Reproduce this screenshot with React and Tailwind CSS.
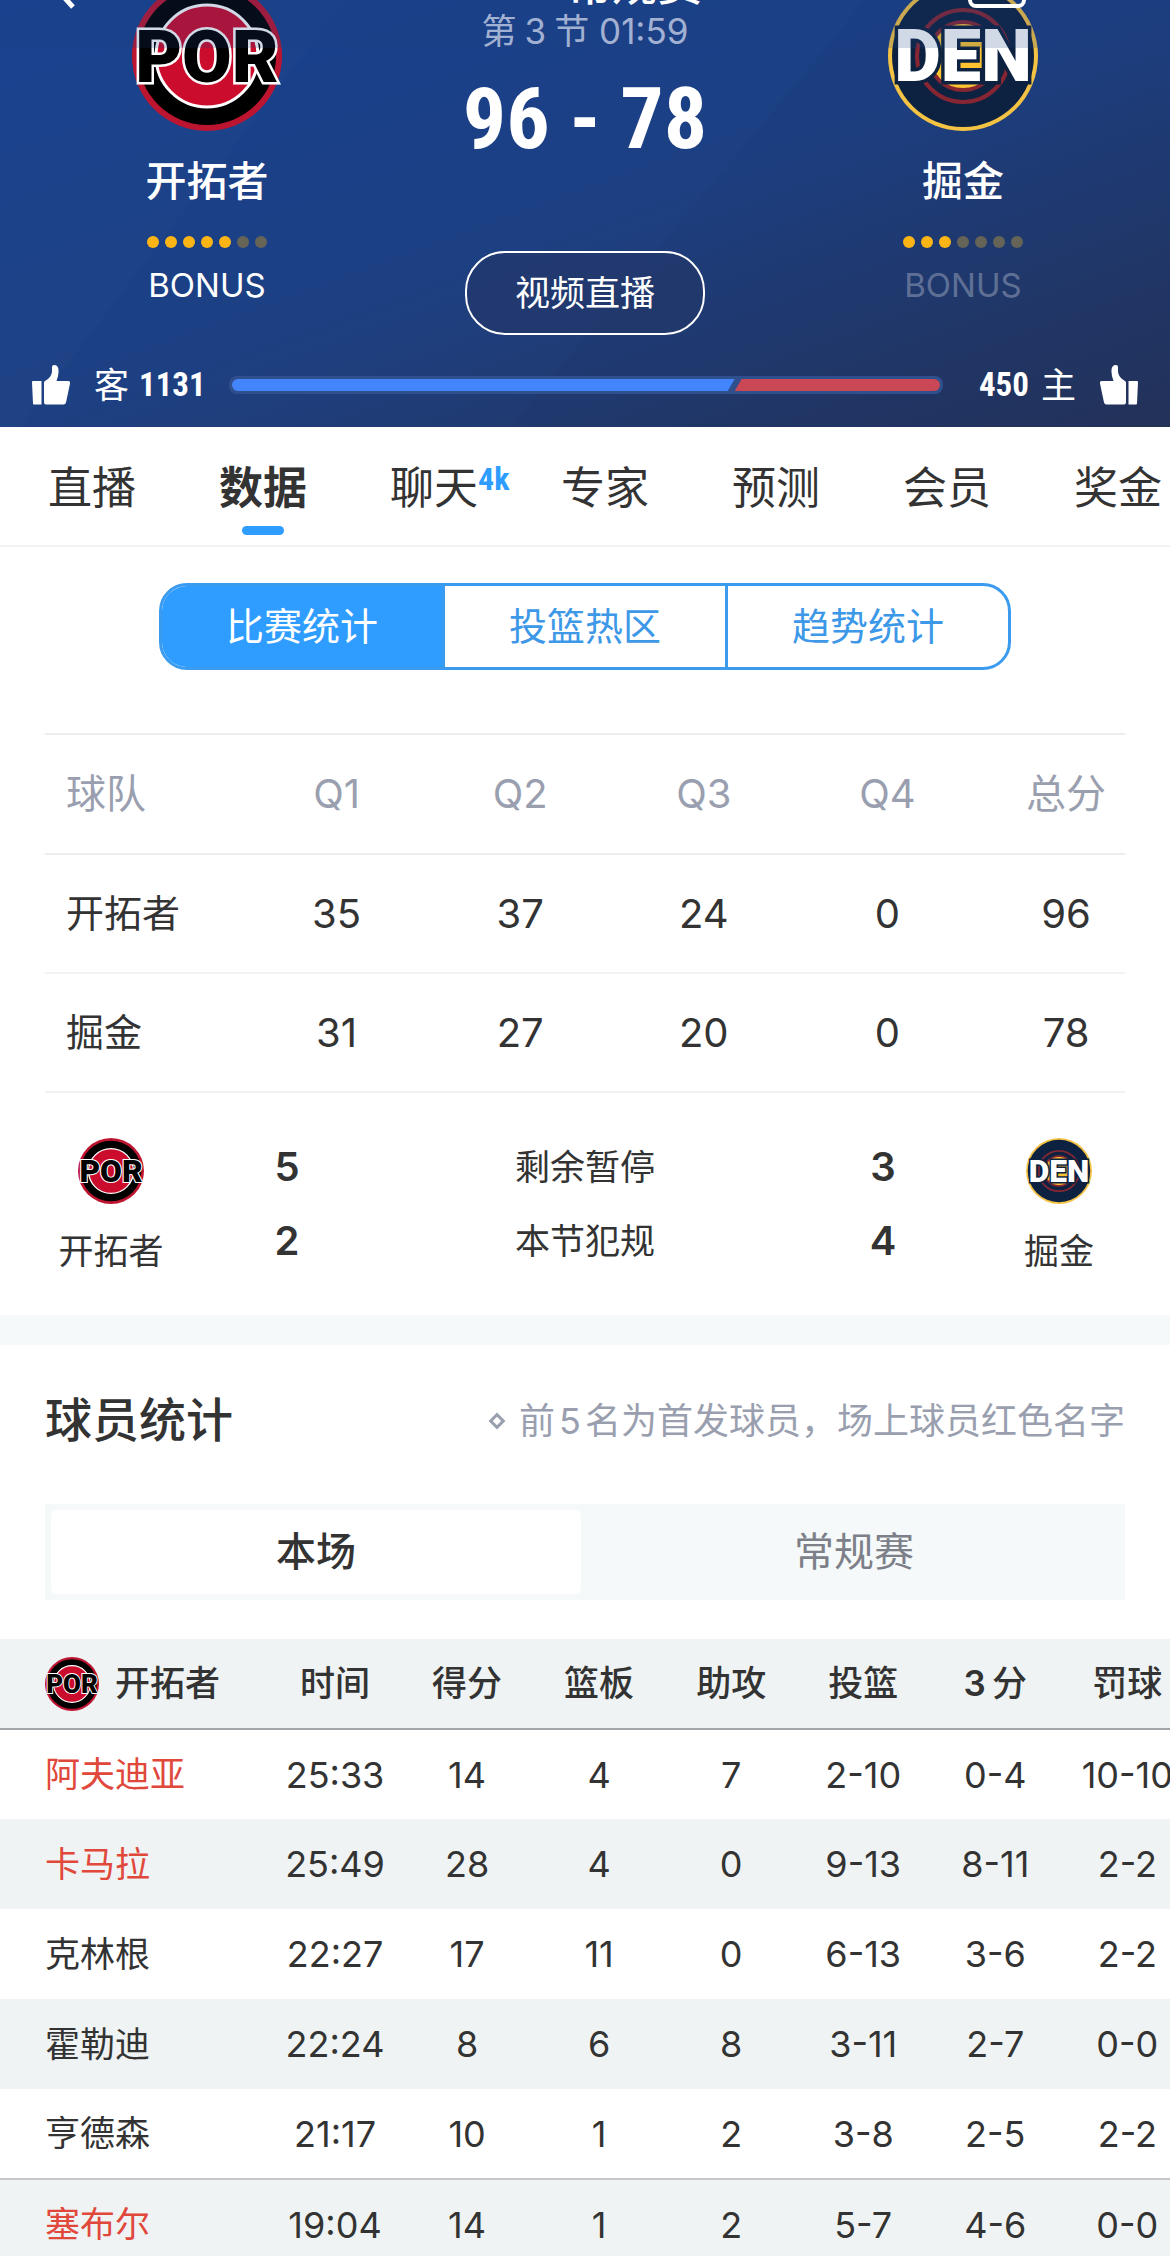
import { useState } from 'react';
import clsx from 'clsx';

const navTabs = [
  { label: '直播' },
  { label: '数据' },
  { label: '聊天', badge: '4k' },
  { label: '专家' },
  { label: '预测' },
  { label: '会员' },
  { label: '奖金' },
];
const statTabs = ['比赛统计', '投篮热区', '趋势统计'];
const rangeTabs = ['本场', '常规赛'];

const quarterHead = ['球队', 'Q1', 'Q2', 'Q3', 'Q4', '总分'];
const quarterRows = [
  ['开拓者', 35, 37, 24, 0, 96],
  ['掘金', 31, 27, 20, 0, 78],
];

const playerHead = ['时间', '得分', '篮板', '助攻', '投篮', '3分', '罚球'];
const players = [
  { name: '阿夫迪亚', onCourt: true, stats: ['25:33', 14, 4, 7, '2-10', '0-4', '10-10'] },
  { name: '卡马拉', onCourt: true, stats: ['25:49', 28, 4, 0, '9-13', '8-11', '2-2'] },
  { name: '克林根', stats: ['22:27', 17, 11, 0, '6-13', '3-6', '2-2'] },
  { name: '霍勒迪', stats: ['22:24', 8, 6, 8, '3-11', '2-7', '0-0'] },
  { name: '亨德森', stats: ['21:17', 10, 1, 2, '3-8', '2-5', '2-2'] },
  { name: '塞布尔', onCourt: true, stats: ['19:04', 14, 1, 2, '5-7', '4-6', '0-0'] },
];

const NARROW = "font-['Roboto_Condensed','Liberation_Sans_Narrow','Noto_Sans_CJK_SC',sans-serif] font-bold";

function PorLogo({ className }) {
  return (
    <svg viewBox="0 0 150 150" className={className} role="img" aria-label="POR">
      <circle cx="75" cy="75" r="75" fill="#bd1530" />
      <circle cx="75" cy="75" r="69" fill="#000" />
      <circle cx="75" cy="75" r="51" fill="#cc0c2c" stroke="#fff" strokeWidth="3" />
      <text x="75" y="101" textAnchor="middle" fontFamily="Roboto, sans-serif" fontWeight="900" fontSize="72"
        fill="#000" stroke="#fff" strokeWidth="5" paintOrder="stroke">POR</text>
    </svg>
  );
}

function DenLogo({ className }) {
  return (
    <svg viewBox="0 0 150 150" className={className} role="img" aria-label="DEN">
      <circle cx="75" cy="75" r="75" fill="#f5c344" />
      <circle cx="75" cy="75" r="71" fill="#0d2240" />
      <circle cx="75" cy="75" r="46" fill="none" stroke="#862633" strokeWidth="4" />
      <circle cx="75" cy="75" r="34" fill="#fec331" stroke="#862633" strokeWidth="4" />
      <text x="75" y="100" textAnchor="middle" fontFamily="Roboto, sans-serif" fontWeight="900" fontSize="72"
        fill="#fff" stroke="#0d2240" strokeWidth="7" paintOrder="stroke">DEN</text>
    </svg>
  );
}

function Thumb({ flip }) {
  return (
    <svg viewBox="0 0 38 40" className={clsx('h-10 w-[38px] shrink-0', flip && '-scale-x-100')} fill="#fff" aria-hidden="true">
      <path d="M1 16h8.500v23.500H2q-1 0-1-1L0 17q0-1 1-1z" />
      <path d="M12 17.500q0-1 1-1.500 6-3 7-9V2q0-2 2-2 5 0 4.500 7 0 4-2 9H36q2.500 0 2 2.500l-4 19q-.5 2-2.500 2H14q-2 0-2-2z" />
    </svg>
  );
}

function TeamHead({ logo, name, timeouts, bonus }) {
  return (
    <div className="flex w-[240px] flex-col items-center">
      {logo}
      <div className="mt-[22px] text-[41px] leading-[56px] font-medium">{name}</div>
      <div className="mt-[27px] flex gap-1.5">
        {[...Array(7)].map((_, i) => (
          <span key={i} className={clsx('size-3 rounded-full', i < timeouts ? 'bg-[#fdb515]' : 'bg-[#666357]')} />
        ))}
      </div>
      <div className={clsx('mt-[17px] text-[33px] leading-10', !bonus && 'text-white/30')}>BONUS</div>
    </div>
  );
}

function Scoreboard() {
  return (
    <header className="relative overflow-hidden bg-linear-to-br from-[#17408f] via-[#1d4083] to-[#23335a] text-white">
      {/* světlejší šikmé pruhy na pozadí */}
      <svg className="absolute inset-0 h-full w-full" viewBox="0 0 1170 428" preserveAspectRatio="none" aria-hidden="true">
        <polygon points="0,0 345,0 20,428 0,428" fill="#fff" opacity="0.01" />
        <polygon points="865,0 1170,0 1170,428 510,428" fill="#000" opacity="0.02" />
      </svg>

      <div className="relative flex justify-between px-[87px]">
        <TeamHead logo={<PorLogo className="-mt-[19px] size-[150px]" />} name="开拓者" timeouts={5} bonus />
        <div className="flex flex-col items-center">
          <div className="mt-2 text-[35px] leading-[46px] text-[#c3cde6]">
            第<span className="mx-2">3</span>节 01:59
          </div>
          <div className={clsx('mt-5 text-[86px] leading-[90px]', NARROW)}>96 - 78</div>
          <button className="mt-[87px] h-[84px] w-[240px] rounded-[40px] border-2 border-white bg-[#22376a]/70 text-[35px]">
            视频直播
          </button>
        </div>
        <TeamHead logo={<DenLogo className="-mt-[19px] size-[150px]" />} name="掘金" timeouts={3} />
      </div>

      <div className="relative mt-[18px] flex items-center px-8 pt-3 pb-[22px]">
        <Thumb />
        <span className="ml-6 text-[35px] leading-10">客</span>
        <span className={clsx('ml-2.5 w-[66px] text-[33px] leading-10', NARROW)}>1131</span>
        <div className="mr-9 ml-6 flex-1 rounded-lg bg-[#2f4f8d] p-[3px]">
          <div className="flex h-3 overflow-hidden rounded-md">
            <div className="flex-1 bg-[#4285ff] [clip-path:polygon(0_0,100%_0,calc(100%-7px)_100%,0_100%)]" />
            <div className="w-[29%] bg-[#ca4755] [clip-path:polygon(7px_0,100%_0,100%_100%,0_100%)]" />
          </div>
        </div>
        <span className={clsx('text-[33px] leading-10', NARROW)}>450</span>
        <span className="mr-6 ml-3 text-[35px] leading-10">主</span>
        <Thumb flip />
      </div>

      <div className="absolute inset-x-0 top-0 h-12 overflow-hidden bg-[#1d3f80]/20">
        <svg className="absolute top-0 left-[60px] h-3 w-5" viewBox="0 0 20 12" aria-hidden="true">
          <path d="M2-5 13 7" stroke="#fff" strokeWidth="5" />
        </svg>
        <div className="absolute -top-10 left-[567px] text-[45px] leading-[50px] font-medium">常规赛</div>
        <div className="absolute -top-8 right-36 h-10 w-[58px] rounded-lg border-4 border-white" />
      </div>
    </header>
  );
}

function NavTabs() {
  const [active, setActive] = useState('数据');
  return (
    <nav className="flex gap-[83px] overflow-hidden border-b-2 border-[#f1f2f3] px-12">
      {navTabs.map(t => (
        <button
          key={t.label}
          onClick={() => setActive(t.label)}
          className={clsx('relative h-[118px] shrink-0 pt-1 text-[44px] leading-[60px]', active === t.label && 'font-bold')}
        >
          {t.label}
          {t.badge && (
            <span className={clsx('absolute top-8 left-full text-[32px] leading-10 text-[#2e9dff]', NARROW)}>{t.badge}</span>
          )}
          {active === t.label && (
            <span className="absolute bottom-2.5 left-1/2 h-[9px] w-[42px] -translate-x-1/2 rounded-full bg-[#2e9dff]" />
          )}
        </button>
      ))}
    </nav>
  );
}

function StatTabs() {
  const [active, setActive] = useState(0);
  return (
    <div className="mx-[159px] mt-9 flex h-[87px] divide-x-3 divide-[#3a9bef] overflow-hidden rounded-[28px] border-3 border-[#3a9bef]">
      {statTabs.map((label, i) => (
        <button
          key={label}
          onClick={() => setActive(i)}
          className={clsx('flex-1 text-[38px]', active === i ? 'bg-[#2e9dff] text-white' : 'text-[#3d98e8]')}
        >
          {label}
        </button>
      ))}
    </div>
  );
}

function QuarterTable() {
  return (
    <div className="mt-[63px] px-[45px]">
      <table className="w-full table-fixed border-t-2 border-[#ebedee]">
        <thead>
          <tr className="h-[120px] border-b-2 border-[#ebedee] text-[40px] text-[#9a9fb0]">
            {quarterHead.map((h, i) => (
              <th
                key={h}
                className={clsx('font-normal', i === 0 ? 'w-[18.5%] pl-[21px] text-left' : i === 5 ? 'w-[13.5%] pl-7' : 'w-[17%]')}
              >
                {h}
              </th>
            ))}
          </tr>
        </thead>
        <tbody>
          {quarterRows.map(row => (
            <tr key={row[0]} className="h-[119px] border-b-2 border-[#f1f2f3] text-[40px]">
              {row.map((v, i) => (
                <td key={i} className={clsx(i === 0 ? 'pl-[21px] text-[38px]' : 'text-center', i === 5 && 'pl-7')}>{v}</td>
              ))}
            </tr>
          ))}
        </tbody>
      </table>
    </div>
  );
}

function TeamBadge({ logo, name }) {
  return (
    <div className="flex w-[132px] flex-col items-center">
      {logo}
      <div className="mt-[22px] text-[35px] leading-[50px]">{name}</div>
    </div>
  );
}

function FoulRow({ left, label, right }) {
  return (
    <div className="flex items-center justify-between leading-[50px]">
      <span className="w-10 text-center text-[40px] font-semibold">{left}</span>
      <span className="text-[35px]">{label}</span>
      <span className="w-10 text-center text-[40px] font-semibold">{right}</span>
    </div>
  );
}

function TeamCompare() {
  return (
    <div className="flex px-[45px] pt-[45px] pb-[39px]">
      <TeamBadge logo={<PorLogo className="size-[66px]" />} name="开拓者" />
      <div className="flex flex-1 flex-col gap-6 px-[90px] pt-1">
        <FoulRow left={5} label="剩余暂停" right={3} />
        <FoulRow left={2} label="本节犯规" right={4} />
      </div>
      <TeamBadge logo={<DenLogo className="size-[66px]" />} name="掘金" />
    </div>
  );
}

function RangeTabs() {
  const [active, setActive] = useState(0);
  return (
    <div className="mx-[45px] flex h-24 gap-2 bg-[#f5f9fa] p-1.5">
      {rangeTabs.map((label, i) => (
        <button
          key={label}
          onClick={() => setActive(i)}
          className={clsx('flex-1 rounded-md text-[40px]', active === i ? 'bg-white font-medium' : 'text-[#7d8088]')}
        >
          {label}
        </button>
      ))}
    </div>
  );
}

function PlayerTable() {
  return (
    <div className="mt-[39px] overflow-hidden">
      <table className="w-[102%] table-fixed text-[36px]">
        <thead>
          <tr className="h-[90px] border-b-2 border-[#a3a6a9] bg-[#f0f3f4] text-[35px]">
            <th className="w-[269px] pl-[45px] font-medium">
              <div className="flex items-center gap-4">
                <PorLogo className="size-[54px]" />
                开拓者
              </div>
            </th>
            {playerHead.map(h => (
              <th key={h} className="font-medium">
                {h === '3分' ? <><span className="mr-1.5 font-semibold">3</span>分</> : h}
              </th>
            ))}
          </tr>
        </thead>
        <tbody>
          {players.map((p, i) => (
            <tr key={p.name} className={clsx('h-[90px]', i % 2 && 'bg-[#f0f3f4]', i === 5 && 'border-t-2 border-[#c5c8ca]')}>
              <td className={clsx('pl-[45px] text-[35px]', p.onCourt && 'text-[#e0483b]')}>{p.name}</td>
              {p.stats.map((s, j) => (
                <td key={j} className="text-center whitespace-nowrap">{s}</td>
              ))}
            </tr>
          ))}
        </tbody>
      </table>
    </div>
  );
}

export default function App() {
  return (
    <div className="min-h-screen overflow-x-hidden bg-white font-['Inter','Noto_Sans_CJK_SC',sans-serif] text-[#333]">
      <Scoreboard />
      <NavTabs />
      <StatTabs />
      <QuarterTable />
      <TeamCompare />
      <div className="h-[30px] bg-[#f5f9fa]" />
      <section>
        <div className="flex h-[159px] items-center justify-between px-[45px] pb-2">
          <h2 className="text-[47px] font-medium">球员统计</h2>
          <p className="flex items-center text-[36px] text-[#9a9fb0]">
            <span className="mr-4 size-3 rotate-45 border-3 border-[#9a9fb0]" />
            前<span className="mx-1">5</span>名为首发球员，场上球员红色名字
          </p>
        </div>
        <RangeTabs />
        <PlayerTable />
      </section>
    </div>
  );
}
